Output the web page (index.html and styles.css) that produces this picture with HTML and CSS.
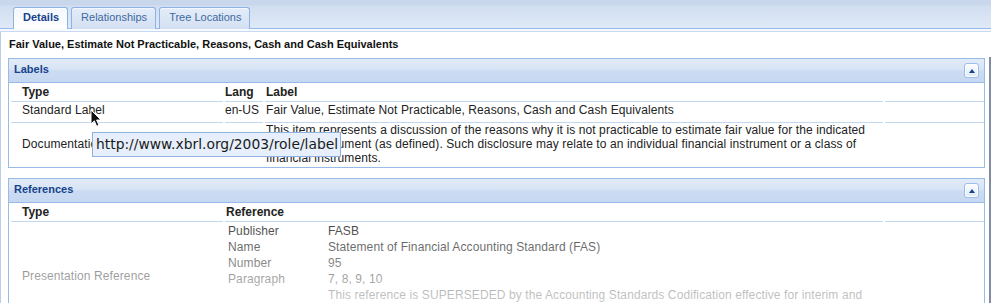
FILE: index.html
```html
<!DOCTYPE html>
<html>
<head>
<meta charset="utf-8">
<link rel="stylesheet" href="styles.css">
</head>
<body>
<div class="app">
  <div class="tabbar">
    <div class="tab active">Details</div>
    <div class="tab">Relationships</div>
    <div class="tab">Tree Locations</div>
  </div>
  <div class="tabbar-edge"></div>
  <div class="workspace">
    <div class="main">
      <div class="title">Fair Value, Estimate Not Practicable, Reasons, Cash and Cash Equivalents</div>

      <section class="panel">
        <header class="panel-head">
          <span class="panel-title">Labels</span>
          <span class="tool"><span class="tri"></span></span>
        </header>
        <div class="panel-body">
          <div class="grid labels-grid">
            <div class="cell hd c1">Type</div>
            <div class="cell hd c2">Lang</div>
            <div class="cell hd c3">Label</div>
            <div class="cell hd c4"></div>

            <div class="cell r1 c1">Standard Label</div>
            <div class="cell r1 c2">en-US</div>
            <div class="cell r1 c3">Fair Value, Estimate Not Practicable, Reasons, Cash and Cash Equivalents</div>
            <div class="cell r1 c4"></div>

            <div class="cell r2 c1 mid">Documentation</div>
            <div class="cell r2 c2 mid">en-US</div>
            <div class="cell r2 c3">This item represents a discussion of the reasons why it is not practicable to estimate fair value for the indicated financial instrument (as defined). Such disclosure may relate to an individual financial instrument or a class of financial instruments.</div>
            <div class="cell r2 c4"></div>
          </div>
        </div>
      </section>

      <section class="panel refs">
        <header class="panel-head">
          <span class="panel-title">References</span>
          <span class="tool"><span class="tri"></span></span>
        </header>
        <div class="panel-body">
          <div class="grid refs-grid">
            <div class="cell hd c1">Type</div>
            <div class="cell hd c3">Reference</div>
            <div class="cell hd c4"></div>

            <div class="cell rr c1 mid">Presentation Reference</div>
            <div class="cell rr c3">
              <div class="kv">
                <div class="k">Publisher</div><div class="v">FASB</div>
                <div class="k">Name</div><div class="v">Statement of Financial Accounting Standard (FAS)</div>
                <div class="k">Number</div><div class="v">95</div>
                <div class="k">Paragraph</div><div class="v">7, 8, 9, 10</div>
                <div class="k"></div><div class="v">This reference is SUPERSEDED by the Accounting Standards Codification effective for interim and annual periods ending after September 15, 2009.</div>
              </div>
            </div>
            <div class="cell rr c4"></div>
          </div>
          <div class="fade"></div>
        </div>
      </section>
    </div>
    <div class="vscroll"></div>
  </div>

  <div class="tooltip">http://www.xbrl.org/2003/role/label</div>
  <svg class="cursor" width="13" height="19" viewBox="0 0 13 19">
    <path d="M1 1 L1 15 L4.3 11.8 L6.7 17.3 L9 16.3 L6.6 11 L11 11 Z" fill="#111" stroke="#fff" stroke-width="1" stroke-linejoin="round"/>
  </svg>
</div>
</body>
</html>
```

FILE: styles.css
```css
html, body {
  margin: 0;
  padding: 0;
}
body {
  width: 991px;
  height: 303px;
  overflow: hidden;
  background: #fff;
  font-family: "Liberation Sans", Arial, sans-serif;
  color: #222;
}
.app {
  position: relative;
  width: 991px;
  height: 303px;
  overflow: hidden;
}

/* tab strip */
.tabbar {
  height: 28px;
  border-bottom: 1px solid #99bbe8;
  background: linear-gradient(#c9d7ed 0, #c9d7ed 5px, #d1def1 6px, #dfe9f7 100%);
  display: flex;
  align-items: flex-end;
  gap: 3px;
  padding-left: 13px;
}
.tab {
  position: relative;
  margin-bottom: -1px;
  padding: 0 8px 3px 9px;
  line-height: 18px;
  font-size: 11px;
  color: #416aa3;
  border: 1px solid #8db2e3;
  border-bottom: none;
  border-radius: 3px 3px 0 0;
  background: linear-gradient(#e4edf9, #d3e0f2);
  box-shadow: inset 0 1px 0 #f3f7fd;
  white-space: nowrap;
}
.tab.active {
  font-weight: bold;
  color: #15428b;
  background: linear-gradient(#f3f7fd, #ffffff);
  box-shadow: inset 0 1px 0 #fff;
}
.tabbar-edge {
  height: 2px;
  background: #f6f9fe;
  border-bottom: 1px solid #c8d9f0;
}

/* workspace */
.workspace {
  display: flex;
  border-left: 1px solid #b9cde9;
  height: 271px;
}
.main {
  flex: 1;
  min-width: 0;
}
.vscroll {
  width: 2px;
  margin-top: 25px;
  background: #7f8ca3;
}

.title {
  padding: 6px 0 0 8px;
  font-size: 11px;
  line-height: 13px;
  font-weight: bold;
  color: #111;
}

/* panels */
.panel {
  margin: 7px 4px 0 7px;
  border: 1px solid #99bbe8;
}
.panel.refs {
  margin-top: 10px;
}
.panel-head {
  display: flex;
  align-items: center;
  justify-content: space-between;
  height: 23px;
  padding: 0 5px;
  border-bottom: 1px solid #99bbe8;
  background: linear-gradient(#e2ebf8 0%, #d8e4f5 45%, #cbdbf2 52%, #c6d8f1 100%);
}
.panel-title {
  font-size: 11px;
  font-weight: bold;
  color: #15428b;
  line-height: 21px;
  padding-bottom: 2px;
}
.tool {
  box-sizing: border-box;
  width: 15px;
  height: 15px;
  border: 1px solid #9dbde6;
  border-radius: 3px;
  background: linear-gradient(#fbfdff, #dfe9f7);
  box-shadow: inset 0 0 0 1px #fff;
  display: flex;
  align-items: center;
  justify-content: center;
}
.tri {
  width: 0;
  height: 0;
  border-left: 3.5px solid transparent;
  border-right: 3.5px solid transparent;
  border-bottom: 4px solid #15428b;
}

.panel-body {
  position: relative;
  padding-left: 2px;
  background: #fff;
}

/* grids */
.grid {
  display: grid;
  column-gap: 2px;
  font-size: 12px;
  line-height: 14px;
  letter-spacing: 0.1px;
}
.labels-grid {
  grid-template-columns: 212px 38px 618px 99px;
}
.refs-grid {
  grid-template-columns: 212px 658px 99px;
}
.cell {
  padding-left: 1px;
  white-space: normal;
}
.cell.c1 {
  padding-left: 11px;
}
.cell.c2 {
  padding-left: 0;
  letter-spacing: 0;
}
.cell.hd {
  font-weight: bold;
  padding-top: 2px;
  padding-bottom: 2px;
  border-bottom: 1px solid #c4d7f0;
  letter-spacing: 0;
}
.cell.r1 {
  padding-top: 1px;
  padding-bottom: 5px;
  border-bottom: 1px solid #c4d7f0;
}
.cell.r2 {
  padding-bottom: 2px;
}
.cell.mid {
  align-self: center;
}
.cell.rr {
  padding-top: 1px;
  padding-bottom: 11px;
}
.cell.rr.mid {
  padding-top: 0;
  padding-bottom: 0;
}

.kv {
  display: grid;
  grid-template-columns: 100px 1fr;
  line-height: 16px;
  padding-left: 2px;
  padding-right: 20px;
}
.fade {
  position: absolute;
  left: 0;
  right: 0;
  top: 19px;
  bottom: 0;
  background: linear-gradient(rgba(255,255,255,0.14) 0px, rgba(255,255,255,0.72) 74px, rgba(255,255,255,0.85) 140px);
  pointer-events: none;
}

/* overlays */
.tooltip {
  position: absolute;
  left: 92px;
  top: 132px;
  padding: 3px 2px 4px 3px;
  border: 1px solid #8fb1df;
  background: #e6effb;
  font-family: "DejaVu Sans", sans-serif;
  font-size: 13.85px;
  line-height: 16px;
  color: #1a1a1a;
  white-space: nowrap;
}
.cursor {
  position: absolute;
  left: 90px;
  top: 109px;
}
```
